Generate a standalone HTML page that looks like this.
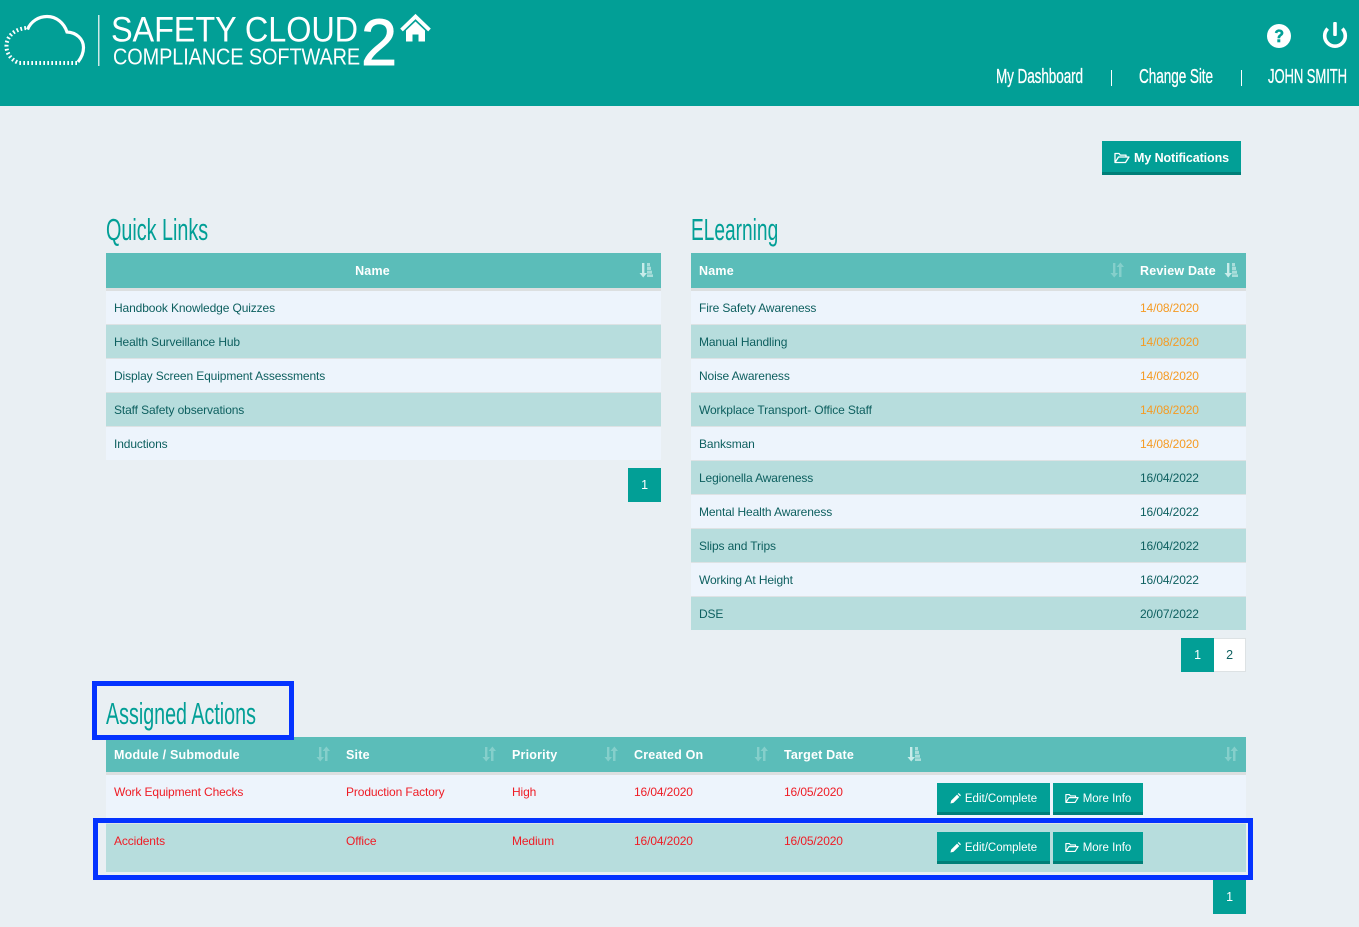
<!DOCTYPE html>
<html lang="en"><head><meta charset="utf-8"><title>Safety Cloud 2</title>
<style>
*{box-sizing:border-box}
html,body{margin:0;padding:0}
body{width:1359px;height:927px;position:relative;overflow:hidden;background:#e9eff3;font-family:"Liberation Sans",sans-serif;font-size:12px;letter-spacing:-.12px;color:#0d5f5f}
header{position:absolute;left:0;top:0;width:1359px;height:106px;background:#029f96}
h2{position:absolute;margin:0;font-family:"Liberation Sans",sans-serif;font-weight:400;color:#029f96;font-size:31px;line-height:36px;letter-spacing:0;white-space:nowrap;transform-origin:left center}
table{position:absolute;border-collapse:separate;border-spacing:0;table-layout:fixed}
th{height:38px;background:#5bbdb9;border-bottom:3px solid #dcdfe0;color:#fff;font-size:12.5px;letter-spacing:.2px;font-weight:700;text-align:left;padding:0 8px;position:relative}
td{height:34px;padding:0 8px;border-bottom:1px solid #dde2e4;background:#edf4fc;white-space:nowrap;overflow:hidden}
tr.o td{background:#b7dddd}
tr:last-child td{border-bottom-color:#e9eff3}
.or{color:#f59b23}
.red td{color:#ef1c25;vertical-align:top;padding-top:10px;height:49px}
.red td.b{padding-top:8px}
th svg{position:absolute;right:8px;top:9px;width:14px;height:16px}
.btn{display:inline-flex;align-items:center;justify-content:center;background:#029f96;border-bottom:3px solid #007f78;color:#fff;height:32px;font-size:11.5px;letter-spacing:0;padding-top:2px;vertical-align:top}
.btn svg{margin-right:4px}
.pg{position:absolute;width:33px;height:34px;line-height:35px;text-align:center;background:#029f96;color:#fff;font-size:12.5px}
.pg.w{background:#fff;color:#0d5f5f;border:1px solid #dde2e4;border-left:0;line-height:33px}
.box{position:absolute;border:5px solid #0433ff;pointer-events:none}
</style></head><body>
<svg width="0" height="0" style="position:absolute">
<defs>
<symbol id="ud" viewBox="0 0 14 16"><g fill="#85cfcb"><path d="M3 1h2.400v10H8l-3.800 4.500L.5 11H3z"/><path d="M9 15V5H6.600L10.400.5 14 5h-2.500v10z"/></g></symbol>
<symbol id="az" viewBox="0 0 14 16"><g fill="#a9dedb"><path d="M3 1h2.400v10H8l-3.800 4.500L.5 11H3z" fill="#c8ecea"/><path d="M8 1h3v3.200H8zM8 4.800h4v3.200H8zM8 8.600h5v3.200H8zM8 12.400h6V15H8z"/></g></symbol>
<symbol id="folder" viewBox="0 0 16 12"><path d="M1 10.500V1.500h4l1.300 1.600H12V5M1 10.500h10.500L15 5H4.500z" fill="none" stroke="#fff" stroke-width="1.300" stroke-linejoin="round"/></symbol>
<symbol id="pencil" viewBox="0 0 12 12"><path d="M0.500 11.500l.7-3.200 6.500-6.500 2.500 2.500-6.500 6.500zM8.500 1l1-1 2.500 2.500-1 1z" fill="#fff"/></symbol>
</defs>
</svg>

<header>
<svg width="1359" height="106" style="position:absolute;left:0;top:0">
<g fill="none" stroke="#fff">
<path d="M27.500 29.500C31 21 39 16.500 47 16.500c9.500 0 17 6.500 20 15.500 9.500.5 16.500 7 16.500 15.500 0 5.500-2 10-5.500 14.500" stroke-width="3.200"/>
<path d="M26 28 C15 29 7 36 6.500 45 C6 53 11 60 19 63 H77" stroke-width="4" stroke-dasharray="1.700 2.300"/>
</g>
<rect x="98" y="15" width="1.500" height="51" fill="#cfeae8"/>
<text x="111" y="41.500" fill="#fff" font-size="35" textLength="247" lengthAdjust="spacingAndGlyphs" font-family="Liberation Sans">SAFETY CLOUD</text>
<text x="113" y="64.500" fill="#fff" font-size="23" textLength="247" lengthAdjust="spacingAndGlyphs" font-family="Liberation Sans">COMPLIANCE SOFTWARE</text>
<text x="361" y="65" fill="#fff" stroke="#fff" stroke-width=".9" font-size="66" textLength="36" lengthAdjust="spacingAndGlyphs" font-family="Liberation Sans">2</text>
<path d="M401.500 30L415.500 16.500l14 13.500" fill="none" stroke="#fff" stroke-width="3.800" stroke-linejoin="miter"/>
<path d="M406 30.500l9.500-9 9.500 9V41.500h-6.500v-7h-6v7H406z" fill="#fff"/>
<g font-family="Liberation Sans" font-size="20.500" fill="#fff" stroke="#fff" stroke-width=".3">
<text x="996" y="83" textLength="87" lengthAdjust="spacingAndGlyphs">My Dashboard</text>
<text x="1139" y="83" textLength="74" lengthAdjust="spacingAndGlyphs">Change Site</text>
<text x="1268" y="83" textLength="79" lengthAdjust="spacingAndGlyphs">JOHN SMITH</text>
</g>
<rect x="1111" y="70" width="1" height="16" fill="#fff"/><rect x="1241" y="70" width="1" height="16" fill="#fff"/>
<circle cx="1279" cy="36" r="12" fill="#fff"/>
<path d="M1274.800 32.800c.4-2.300 2.200-3.400 4.300-3.400 2.400 0 4.300 1.400 4.300 3.500 0 2.900-3.200 2.900-3.200 5.300h-2.700c0-3.700 3.100-3.600 3.100-5.200 0-.8-.7-1.200-1.500-1.200-1 0-1.500.6-1.800 1.400z" fill="#029f96"/>
<rect x="1277.300" y="39.300" width="3" height="3" fill="#029f96"/>
<path d="M1327.700 28.600a10.300 10.300 0 1 0 14.600 0" fill="none" stroke="#fff" stroke-width="3.600"/>
<rect x="1333.200" y="22" width="3.600" height="14" rx="1" fill="#fff"/>
</svg>
</header>

<a class="btn" style="position:absolute;left:1102px;top:141px;width:139px;height:34px;font-size:12.5px;font-weight:700;letter-spacing:-.1px"><svg width="16" height="12"><use href="#folder"/></svg>My Notifications</a>

<h2 style="left:106px;top:212px;transform:scaleX(.6375)">Quick Links</h2>
<table style="left:106px;top:253px;width:555px">
<tr><th style="text-align:center;padding-right:30px">Name<svg><use href="#az"/></svg></th></tr>
<tr><td>Handbook Knowledge Quizzes</td></tr>
<tr class="o"><td>Health Surveillance Hub</td></tr>
<tr><td>Display Screen Equipment Assessments</td></tr>
<tr class="o"><td>Staff Safety observations</td></tr>
<tr><td>Inductions</td></tr>
</table>
<div class="pg" style="left:628px;top:468px">1</div>

<h2 style="left:691px;top:212px;transform:scaleX(.617)">ELearning</h2>
<table style="left:691px;top:253px;width:555px">
<colgroup><col style="width:441px"><col style="width:114px"></colgroup>
<tr><th>Name<svg><use href="#ud"/></svg></th><th>Review Date<svg><use href="#az"/></svg></th></tr>
<tr><td>Fire Safety Awareness</td><td class="or">14/08/2020</td></tr>
<tr class="o"><td>Manual Handling</td><td class="or">14/08/2020</td></tr>
<tr><td>Noise Awareness</td><td class="or">14/08/2020</td></tr>
<tr class="o"><td>Workplace Transport- Office Staff</td><td class="or">14/08/2020</td></tr>
<tr><td>Banksman</td><td class="or">14/08/2020</td></tr>
<tr class="o"><td>Legionella Awareness</td><td>16/04/2022</td></tr>
<tr><td>Mental Health Awareness</td><td>16/04/2022</td></tr>
<tr class="o"><td>Slips and Trips</td><td>16/04/2022</td></tr>
<tr><td>Working At Height</td><td>16/04/2022</td></tr>
<tr class="o"><td>DSE</td><td>20/07/2022</td></tr>
</table>
<div class="pg" style="left:1181px;top:638px">1</div>
<div class="pg w" style="left:1214px;top:638px;width:32px">2</div>

<h2 style="left:106px;top:696px;transform:scaleX(.635)">Assigned Actions</h2>
<table style="left:106px;top:737px;width:1140px">
<colgroup><col style="width:232px"><col style="width:166px"><col style="width:122px"><col style="width:150px"><col style="width:153px"><col style="width:317px"></colgroup>
<tr><th>Module / Submodule<svg><use href="#ud"/></svg></th><th>Site<svg><use href="#ud"/></svg></th><th>Priority<svg><use href="#ud"/></svg></th><th>Created On<svg><use href="#ud"/></svg></th><th>Target Date<svg><use href="#az"/></svg></th><th><svg><use href="#ud"/></svg></th></tr>
<tr class="red"><td>Work Equipment Checks</td><td>Production Factory</td><td>High</td><td>16/04/2020</td><td>16/05/2020</td>
<td class="b"><a class="btn" style="width:113px"><svg width="11" height="11"><use href="#pencil"/></svg>Edit/Complete</a><a class="btn" style="width:90px;margin-left:3px"><svg width="14" height="11"><use href="#folder"/></svg>More Info</a></td></tr>
<tr class="red o"><td>Accidents</td><td>Office</td><td>Medium</td><td>16/04/2020</td><td>16/05/2020</td>
<td class="b"><a class="btn" style="width:113px"><svg width="11" height="11"><use href="#pencil"/></svg>Edit/Complete</a><a class="btn" style="width:90px;margin-left:3px"><svg width="14" height="11"><use href="#folder"/></svg>More Info</a></td></tr>
</table>
<div class="pg" style="left:1213px;top:880px">1</div>

<div class="box" style="left:92px;top:681px;width:202px;height:59px"></div>
<div class="box" style="left:93px;top:818px;width:1160px;height:62px"></div>
</body></html>
